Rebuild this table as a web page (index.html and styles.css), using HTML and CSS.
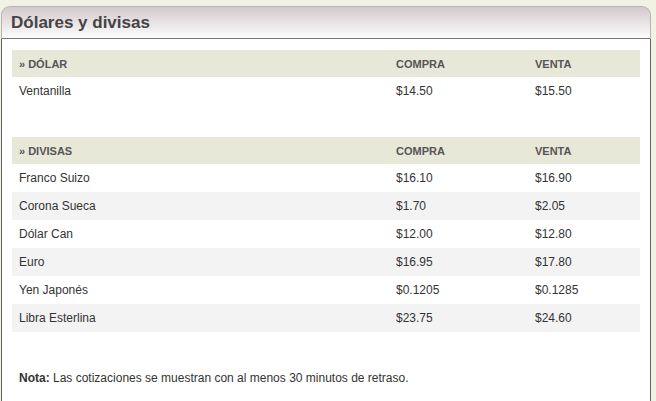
FILE: index.html
```html
<!DOCTYPE html>
<html lang="es">
<head>
<meta charset="utf-8">
<link rel="stylesheet" href="styles.css">
</head>
<body>
<div class="panel">
  <div class="panel-head"><h1>Dólares y divisas</h1></div>
  <div class="panel-body">
    <table class="rates">
      <colgroup><col class="c1"><col class="c2"><col class="c3"></colgroup>
      <thead><tr><th>» DÓLAR</th><th>COMPRA</th><th>VENTA</th></tr></thead>
      <tbody>
        <tr><td>Ventanilla</td><td>$14.50</td><td>$15.50</td></tr>
      </tbody>
    </table>
    <table class="rates second">
      <colgroup><col class="c1"><col class="c2"><col class="c3"></colgroup>
      <thead><tr><th>» DIVISAS</th><th>COMPRA</th><th>VENTA</th></tr></thead>
      <tbody class="striped">
        <tr><td>Franco Suizo</td><td>$16.10</td><td>$16.90</td></tr>
        <tr><td>Corona Sueca</td><td>$1.70</td><td>$2.05</td></tr>
        <tr><td>Dólar Can</td><td>$12.00</td><td>$12.80</td></tr>
        <tr><td>Euro</td><td>$16.95</td><td>$17.80</td></tr>
        <tr><td>Yen Japonés</td><td>$0.1205</td><td>$0.1285</td></tr>
        <tr><td>Libra Esterlina</td><td>$23.75</td><td>$24.60</td></tr>
      </tbody>
    </table>
    <p class="note"><b>Nota:</b> Las cotizaciones se muestran con al menos 30 minutos de retraso.</p>
  </div>
</div>
</body>
</html>
```
FILE: styles.css
```css
html, body {
  margin: 0;
  padding: 0;
  background: #f2f2e4;
  font-family: "Liberation Sans", Arial, sans-serif;
}
.panel {
  margin: 6px 0 0 1px;
  width: 650px;
  box-sizing: border-box;
}
.panel-head {
  height: 33px;
  box-sizing: border-box;
  border: 1px solid #b9b4b4;
  border-bottom: 1px solid #777;
  border-radius: 9px 9px 0 0;
  background: linear-gradient(#d3c9cd, #fdfcfd);
  padding: 0 0 0 9px;
}
.panel-head h1 {
  margin: 0;
  font-size: 17px;
  line-height: 32px;
  font-weight: bold;
  color: #444;
}
.panel-body {
  background: #fff;
  border-left: 1px solid #666;
  border-right: 1px solid #666;
  padding: 11px 9px 0 10px;
  height: 362px;
  box-sizing: border-box;
}
.rates {
  width: 628px;
  border-collapse: collapse;
  table-layout: fixed;
}
.rates .c1 { width: 377px; }
.rates .c2 { width: 139px; }
.rates .c3 { width: 112px; }
.rates th {
  background: #e8e8d9;
  height: 27px;
  padding: 0 0 0 7px;
  text-align: left;
  font-size: 11px;
  font-weight: bold;
  color: #555;
}
.rates td {
  height: 28px;
  padding: 0 0 0 7px;
  font-size: 12px;
  color: #333;
}
.rates.second { margin-top: 32px; }
.striped tr:nth-child(even) td { background: #f3f3f3; }
.note {
  margin: 39px 0 0 7px;
  font-size: 12px;
  color: #333;
}
```
